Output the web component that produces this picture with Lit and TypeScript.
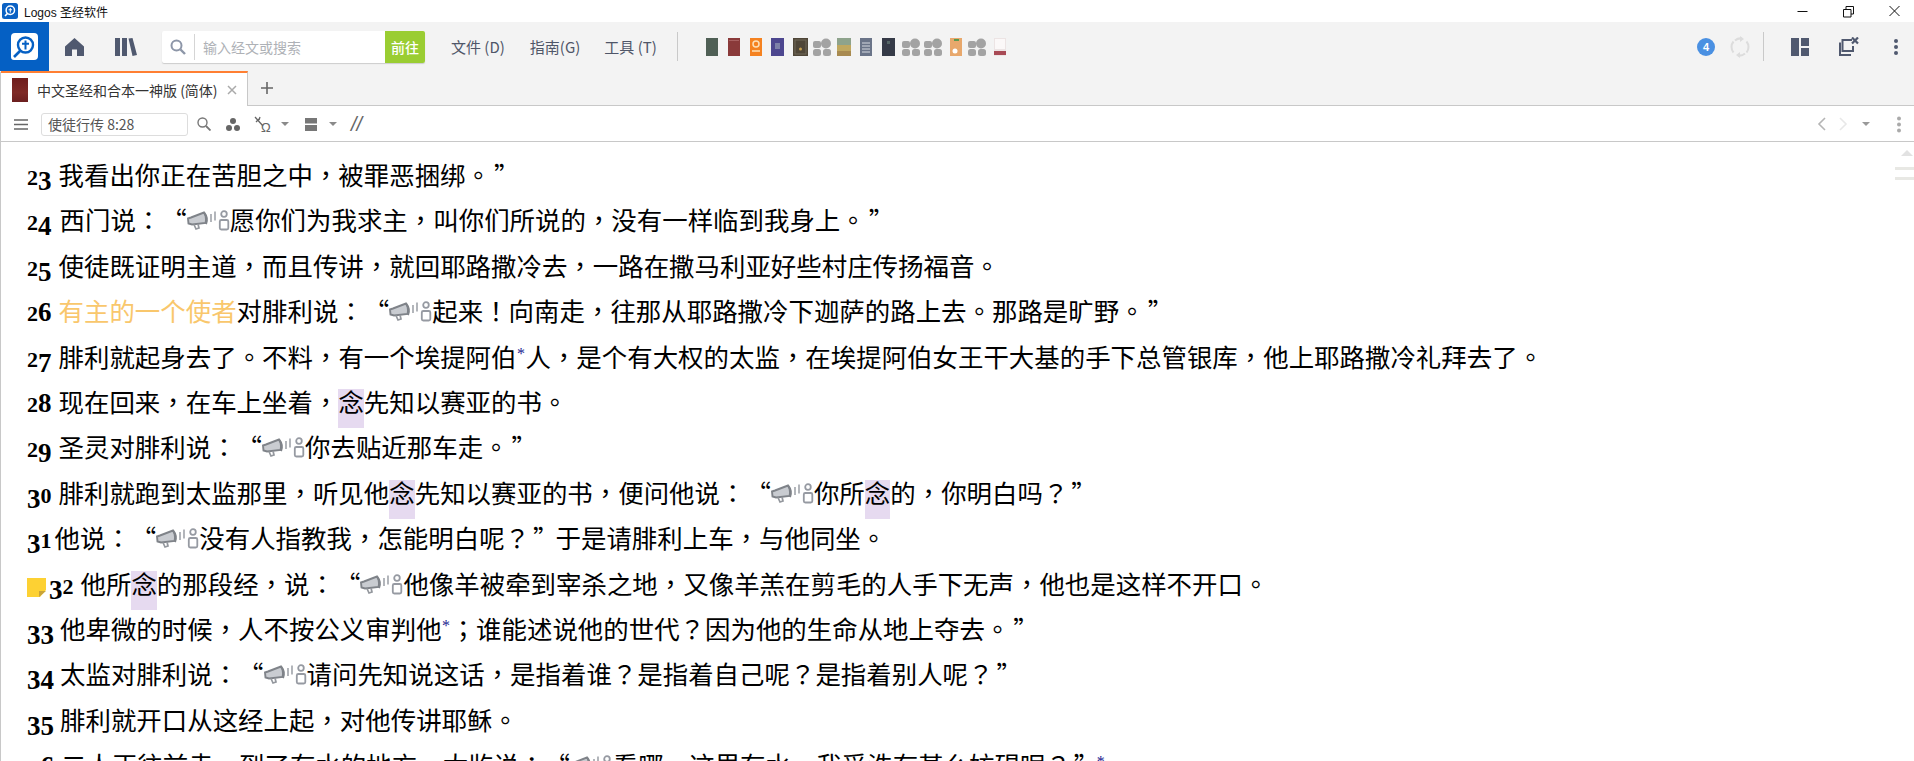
import { LitElement, html, css, svg } from "lit";
import { customElement } from "lit/decorators.js";

const speak = html`<svg class="speak" width="43" height="21" viewBox="0 0 43 21" aria-hidden="true">
  <g fill="none">
    <path d="M1 8.500 L4 7.500 L17 2.500 Q20 7 18.500 13 L5 14.500 L1.500 13.500 Z" fill="#c9ccd1" stroke="#7f8389" stroke-width="1.900"/>
    <path d="M17 2.500 Q21.500 8 19 14" stroke="#7f8389" stroke-width="2"/>
    <path d="M7 14.500 L9 19 L12 18 L11 14" stroke="#94989e" stroke-width="1.700"/>
    <path d="M24 4 v8 M28 1.500 v9" stroke-width="1.600" stroke="#a0a4aa"/>
    <circle cx="37" cy="4" r="2.800" stroke="#969aa2" stroke-width="1.800"/>
    <rect x="32.800" y="10" width="8.500" height="9.500" rx="1.500" stroke="#969aa2" stroke-width="1.800"/>
  </g></svg>`;

const nian = html`<span class="hl">念</span>`;
const star = html`<sup>*</sup>`;

const split = (s: string) =>
  s.split(/([，。！？：；”])/).map((c, i) =>
    i % 2 ? (c === "”" ? html`<span class="cq">${c}</span>` : html`<span class="p">${c}</span>`) : c,
  );
const T = (strings: TemplateStringsArray, ...vals: unknown[]) => {
  const out: unknown[] = [];
  strings.forEach((s, i) => {
    out.push(...split(s));
    if (i < vals.length) out.push(vals[i]);
  });
  return out;
};

const verses: { n: string; t: unknown; note?: boolean; mr?: number }[] = [
  { n: "23", t: T`我看出你正在苦胆之中，被罪恶捆绑。”` },
  { n: "24", t: T`西门说：“${speak}愿你们为我求主，叫你们所说的，没有一样临到我身上。”`, mr: 8 },
  { n: "25", t: T`使徒既证明主道，而且传讲，就回耶路撒冷去，一路在撒马利亚好些村庄传扬福音。` },
  { n: "26", t: T`${html`<span class="angel">有主的一个使者</span>`}对腓利说：“${speak}起来！向南走，往那从耶路撒冷下迦萨的路上去。那路是旷野。”` },
  { n: "27", t: T`腓利就起身去了。不料，有一个埃提阿伯${star}人，是个有大权的太监，在埃提阿伯女王干大基的手下总管银库，他上耶路撒冷礼拜去了。` },
  { n: "28", t: T`现在回来，在车上坐着，${nian}先知以赛亚的书。` },
  { n: "29", t: T`圣灵对腓利说：“${speak}你去贴近那车走。”` },
  { n: "30", t: T`腓利就跑到太监那里，听见他${nian}先知以赛亚的书，便问他说：“${speak}你所${nian}的，你明白吗？”` },
  { n: "31", t: T`他说：“${speak}没有人指教我，怎能明白呢？”于是请腓利上车，与他同坐。`, mr: 3 },
  { n: "32", note: true, t: T`他所${nian}的那段经，说：“${speak}他像羊被牵到宰杀之地，又像羊羔在剪毛的人手下无声，他也是这样不开口。` },
  { n: "33", t: T`他卑微的时候，人不按公义审判他${star}；谁能述说他的世代？因为他的生命从地上夺去。”`, mr: 6 },
  { n: "34", t: T`太监对腓利说：“${speak}请问先知说这话，是指着谁？是指着自己呢？是指着别人呢？”`, mr: 6 },
  { n: "35", t: T`腓利就开口从这经上起，对他传讲耶稣。`, mr: 6 },
  { n: "36", t: T`二人正往前走，到了有水的地方。太监说：“${speak}看哪，这里有水，我受洗有甚么妨碍呢？”${star}` },
];

const digitClass = (d: string) => ("012".includes(d) ? "dx" : "68".includes(d) ? "dt" : "dd");

const group = svg`<g fill="#a3a3a3"><rect x="0" y="3" width="8" height="7" rx="2"/><circle cx="13" cy="5.500" r="5"/><rect x="0" y="11" width="8" height="7" rx="2.500"/><rect x="10" y="11" width="8" height="7" rx="2.500"/></g>`;

const book = (w: number, ml: number, inner: unknown) =>
  html`<svg style="margin-left:${ml}px" width=${w} height="18" viewBox="0 0 ${w} 18">${inner}</svg>`;
const thumbs = [
  book(12, 0, svg`<rect width="12" height="18" fill="#4f5f55"/>`),
  book(12, 10, svg`<rect width="12" height="18" fill="#8a3a3a"/><rect x="1" y="2" width="10" height="1" fill="#a86060"/>`),
  book(12, 10, svg`<rect width="12" height="18" fill="#f58220"/><circle cx="6" cy="6" r="3" fill="none" stroke="#fde0b8" stroke-width="1.500"/><rect x="2" y="12" width="8" height="2" fill="#fcc98f"/>`),
  book(13, 9, svg`<rect width="13" height="18" fill="#4d478f"/><rect x="4" y="5" width="5" height="6" fill="#7d80a8"/>`),
  book(15, 9, svg`<rect width="15" height="18" fill="#4f4638"/><rect x="2" y="2" width="11" height="14" fill="none" stroke="#706858"/><circle cx="7.500" cy="11" r="1.500" fill="#c6a050"/>`),
  book(18, 5, group),
  book(14, 6, svg`<rect width="14" height="18" fill="#8ea38c"/><rect y="7" width="14" height="6" fill="#c0a860"/><rect y="13" width="14" height="5" fill="#a88a50"/>`),
  book(12, 9, svg`<rect width="12" height="18" fill="#6a7488"/><path d="M2 5h8M2 8h8M2 11h8M2 14h8" stroke="#d5d9e0"/>`),
  book(13, 10, svg`<rect width="13" height="18" fill="#353a47"/><rect x="5" y="3" width="3" height="3" fill="#566"/>`),
  book(18, 7, group),
  book(18, 4, group),
  book(12, 8, svg`<rect width="12" height="18" fill="#e8a86c"/><rect x="4" y="1" width="5" height="2" fill="#5a9a50"/><circle cx="5" cy="13" r="2.500" fill="#fff"/>`),
  book(18, 6, group),
  book(12, 8, svg`<rect width="12" height="18" fill="#ece4e4"/><rect x="1" y="1" width="10" height="10" fill="#fbf8f8"/><rect y="13" width="12" height="4" fill="#a84a55"/>`),
];

@customElement("app-root")
export class AppRoot extends LitElement {
  static styles = css`
    :host { display: block; width: 1914px; height: 761px; overflow: hidden; background: #fff; font-family: "Noto Sans CJK SC", "Noto Sans", sans-serif; position: relative; text-spacing-trim: space-all; }
    svg { display: block; flex: none; }
    .title { height: 22px; display: flex; align-items: center; padding-left: 2px; font-size: 12px; color: #111; font-family: "Liberation Sans", "Noto Sans CJK SC", sans-serif; }
    .title span { margin-left: 6px; }
    .winbtns { margin-left: auto; display: flex; gap: 35px; padding-right: 14px; }
    .bar { height: 49px; background: #f3f3f3; display: flex; align-items: center; }
    .logo { width: 49px; height: 49px; background: #0560c4; display: flex; align-items: center; justify-content: center; }
    .home { margin-left: 16px; }
    .lib { margin-left: 31px; }
    .search { margin-left: 25px; width: 263px; height: 32px; background: #fff; border-radius: 2px; box-shadow: 0 1px 1px #ccc; display: flex; align-items: center; }
    .search svg { margin-left: 8px; }
    .search i { width: 1px; height: 26px; background: #d5d5d5; margin-left: 8px; }
    .ph { margin-left: 8px; font-size: 14px; color: #aeb1b6; flex: 1; }
    .go { width: 40px; height: 32px; background: #9acd32; color: #fff; font-size: 14px; font-weight: 500; display: flex; align-items: center; justify-content: center; border-radius: 0 2px 2px 0; }
    .menu { margin-left: 26px; font-size: 15px; color: #4f5668; white-space: nowrap; }
    .m2 { margin-left: 25px; }
    .m3 { margin-left: 24px; }
    .sep { width: 1px; height: 29px; background: #c9c9c9; flex: none; }
    .bar > .sep.first { margin-left: 20px; }
    .thumbs { display: flex; align-items: center; margin-left: 28px; height: 18px; }
    .barright { margin-left: auto; display: flex; align-items: center; }
    .badge { width: 18px; height: 18px; border-radius: 50%; background: #4a90e2; color: #fff; font: bold 11px "Liberation Sans", sans-serif; display: flex; align-items: center; justify-content: center; }
    .sync { margin-left: 15px; }
    .barright .sep { margin-left: 13px; }
    .lay { margin-left: 27px; }
    .pop { margin-left: 29px; }
    .kebab { margin-left: 34px; margin-right: 15px; }
    .tabs { height: 35px; display: flex; background: #f3f3f3; align-items: stretch; box-sizing: border-box; }
    .tab { margin-left: 1px; width: 247px; background: #fff; border-top: 2px solid #ff7f32; border-right: 1px solid #c8c8c8; box-sizing: border-box; display: flex; align-items: center; padding-left: 11px; font-size: 14px; color: #333; white-space: nowrap; }
    .cover { width: 16px; height: 24px; background: linear-gradient(#6e1c1c, #7e2a26 60%, #6b1f1f); flex: none; margin-right: 9px; }
    .tab b { font-weight: 400; }
    .x { margin-left: auto; margin-right: 10px; }
    .tabrest { flex: 1; border-bottom: 1px solid #c8c8c8; display: flex; align-items: center; padding-left: 13px; }
    .tools { height: 36px; box-sizing: border-box; border-bottom: 1px solid #c8c8c8; display: flex; align-items: center; margin-left: 1px; padding: 1px 0 0 13px; }
    .ref { margin-left: 13px; width: 147px; height: 23px; box-sizing: border-box; border: 1px solid #ddd; border-radius: 3px; font-size: 14px; color: #555; padding-left: 6px; display: flex; align-items: center; }
    .caret { width: 0; height: 0; border-left: 4px solid transparent; border-right: 4px solid transparent; border-top: 4px solid #8a8a8a; flex: none; }
    .slashes { margin-left: 14px; font: italic 20px "Liberation Sans", sans-serif; color: #666; letter-spacing: 0; line-height: 1.2; }
    .tright { margin-left: auto; display: flex; align-items: center; padding-right: 12px; }
    .body { padding: 9px 0 0 27px; height: 619px; overflow: hidden; box-sizing: border-box; color: #000; font-size: 25.45px; }
    .v { height: 45.4px; line-height: 45.4px; white-space: nowrap; }
    .n { font-family: "Liberation Serif", serif; font-weight: 700; font-size: 27px; margin-right: 7px; line-height: 0; }
    .dx { font-size: 22px; line-height: 0; }
    .dt { line-height: 0; }
    .dd { line-height: 0; vertical-align: -5px; }
    .p { font-family: "Noto Sans CJK TC", sans-serif; }
    .cq { padding-left: 3px; margin-right: -3px; }
    .note { display: inline-block; vertical-align: -3px; margin-right: 3px; }
    .speak { display: inline-block; vertical-align: -1px; }
    .angel { color: #f9c76c; }
    .hl { position: relative; display: inline-block; z-index: 0; line-height: 1; }
    .hl::before { content: ""; position: absolute; left: 0; right: 0; top: 1px; height: 39px; background: #e6daf0; z-index: -1; }
    sup { color: #1a1a90; font-size: 16px; line-height: 0; vertical-align: 8px; margin: 0 .5px; font-family: "Liberation Serif", serif; }
    .edge { position: absolute; left: 0; top: 72px; bottom: 0; width: 1px; background: #c8c8c8; }
    .scroll { position: absolute; right: 0; top: 150px; width: 19px; display: flex; flex-direction: column; align-items: flex-end; }
    .tri { width: 0; height: 0; border-left: 6px solid transparent; border-right: 6px solid transparent; border-bottom: 6px solid #e2e2e2; margin-right: 1px; }
    .ln { width: 19px; height: 3px; background: #e8e8e4; margin-top: 7px; }
    .ln.a { margin-top: 11px; }
  `;

  render() {
    return html`
      <div class="title">
        <svg width="16" height="16" viewBox="0 0 16 16"><rect width="16" height="16" rx="2.500" fill="#0b62c4"/><circle cx="8.300" cy="7.300" r="4.200" fill="none" stroke="#fff" stroke-width="1.500"/><path d="M5.300 10.600 L3 13" stroke="#fff" stroke-width="1.600"/><path d="M8.300 5v4.600M6.600 6.800h3.400" stroke="#fff" stroke-width="1"/></svg>
        <span>Logos 圣经软件</span>
        <div class="winbtns">
          <svg width="11" height="18" viewBox="0 0 11 18"><path d="M0.500 9.500h10" stroke="#111"/></svg>
          <svg width="11" height="18" viewBox="0 0 11 18"><path d="M.5 7.500h7.500v7.500h-7.500zM3 7.500v-3h7.500v7.500h-2.500" fill="none" stroke="#111"/></svg>
          <svg width="11" height="18" viewBox="0 0 11 18"><path d="M.5 4l10 10M10.500 4l-10 10" stroke="#111"/></svg>
        </div>
      </div>
      <div class="bar">
        <div class="logo"><svg width="27" height="27" viewBox="0 0 27 27"><path d="M4 0h19a4 4 0 0 1 4 4v19a4 4 0 0 1-4 4H4l-1 0a3 3 0 0 1-3-3V4a4 4 0 0 1 4-4z" fill="#fff"/><circle cx="14.500" cy="12" r="7.500" fill="none" stroke="#0560c4" stroke-width="2.400"/><path d="M9 18 L3 24" stroke="#0560c4" stroke-width="2.600"/><path d="M14.500 7.500v9M11 10.800h7" stroke="#0560c4" stroke-width="2"/></svg></div>
        <svg class="home" width="19" height="18" viewBox="0 0 19 18"><path d="M9.500 0 L19 8.500 V18 H12 V11.500 H7 V18 H0 V8.500 Z" fill="#50596f"/></svg>
        <svg class="lib" width="22" height="18" viewBox="0 0 22 18"><path d="M0 0h5v18H0zM7 0h5v18H7zM13.500 .5l4-.5 4.500 17-4.500 1z" fill="#50596f"/></svg>
        <div class="search">
          <svg width="16" height="16" viewBox="0 0 16 16"><circle cx="6.500" cy="6.500" r="5" fill="none" stroke="#8d96a8" stroke-width="2"/><path d="M10.500 10.500 L15 15" stroke="#8d96a8" stroke-width="2.400"/></svg>
          <i></i><span class="ph">输入经文或搜索</span><span class="go">前往</span>
        </div>
        <span class="menu">文件 (D)</span>
        <span class="menu m2">指南(G)</span>
        <span class="menu m3">工具 (T)</span>
        <span class="sep first"></span>
        <div class="thumbs">${thumbs}</div>
        <div class="barright">
          <span class="badge">4</span>
          <svg class="sync" width="20" height="22" viewBox="0 0 20 22"><path d="M5 4.500A8.600 8.600 0 0 1 12 2.500M15 17.500A8.600 8.600 0 0 1 8 19.500M16.500 5.500a8.600 8.600 0 0 1 0 11M3.500 16.500a8.600 8.600 0 0 1 0-11" fill="none" stroke="#dcdcdc" stroke-width="2"/><path d="M10 0 L14 3 10 6zM10 22 L6 19 10 16z" fill="#dcdcdc"/></svg>
          <span class="sep"></span>
          <svg class="lay" width="18" height="18" viewBox="0 0 18 18"><path d="M0 0h8v18H0zM10 0h8v8h-8zM10 10h8v8h-8z" fill="#50596f"/></svg>
          <svg class="pop" width="21" height="20" viewBox="0 0 21 20"><path d="M14 3H4.500V14H15V9M2 5.500V18H13" fill="none" stroke="#50596f" stroke-width="2"/><path d="M14 0.500l6 6M20 0.500l-6 6" stroke="#50596f" stroke-width="2.200"/></svg>
          <svg class="kebab" width="6" height="18" viewBox="0 0 6 18"><g fill="#50596f"><circle cx="3" cy="3" r="2"/><circle cx="3" cy="9" r="2"/><circle cx="3" cy="15" r="2"/></g></svg>
        </div>
      </div>
      <div class="tabs">
        <div class="tab"><span class="cover"></span><b>中文圣经和合本一神版 (简体)</b>
          <svg class="x" width="10" height="10" viewBox="0 0 10 10"><path d="M1 1l8 8M9 1l-8 8" stroke="#aaa" stroke-width="1.500"/></svg></div>
        <div class="tabrest"><svg width="12" height="12" viewBox="0 0 12 12"><path d="M6 0v12M0 6h12" stroke="#666" stroke-width="1.600"/></svg></div>
      </div>
      <div class="tools">
        <svg width="14" height="11" viewBox="0 0 14 11"><path d="M0 1h14M0 5.500h14M0 10h14" stroke="#666" stroke-width="1.500"/></svg>
        <div class="ref">使徒行传 8:28</div>
        <svg style="margin-left:9px" width="14" height="14" viewBox="0 0 14 14"><circle cx="5.500" cy="5.500" r="4.500" fill="none" stroke="#777" stroke-width="1.400"/><path d="M9 9l4.500 4.500" stroke="#777" stroke-width="1.800"/></svg>
        <svg style="margin-left:15px" width="14" height="13" viewBox="0 0 14 13"><g fill="#666"><circle cx="7" cy="3" r="3"/><circle cx="3" cy="10" r="3"/><circle cx="11" cy="10" r="3"/></g></svg>
        <svg style="margin-left:14px" width="18" height="17" viewBox="0 0 18 17"><path d="M1 1l8 9M2 6l3-3M6 1l-1 3" stroke="#666" stroke-width="1.300" fill="none"/><text x="7" y="16" font-size="13" font-family="Liberation Sans" fill="#666">Ω</text></svg>
        <span class="caret" style="margin-left:9px"></span>
        <svg style="margin-left:16px" width="12" height="13" viewBox="0 0 12 13"><path d="M0 0h12v5.500H0zM0 7h12v6H0z" fill="#777"/></svg>
        <span class="caret" style="margin-left:12px"></span>
        <span class="slashes">//</span>
        <div class="tright">
          <svg width="9" height="14" viewBox="0 0 9 14"><path d="M8 1L2 7l6 6" fill="none" stroke="#b5b5b5" stroke-width="1.600"/></svg>
          <svg style="margin-left:13px" width="9" height="14" viewBox="0 0 9 14"><path d="M1 1l6 6-6 6" fill="none" stroke="#e8e8e8" stroke-width="1.600"/></svg>
          <span class="caret" style="margin-left:14px;border-top-color:#999"></span>
          <svg style="margin-left:26px" width="6" height="17" viewBox="0 0 6 17"><g fill="#aaa"><circle cx="3" cy="2.500" r="2"/><circle cx="3" cy="8.500" r="2"/><circle cx="3" cy="14.500" r="2"/></g></svg>
        </div>
      </div>
      <div class="body">
        ${verses.map((v) => html`<div class="v">${v.note ? html`<svg class="note" width="19" height="19" viewBox="0 0 19 19"><path d="M0 0h19v12l-6 7H0z" fill="#fdd133"/><path d="M12 19v-6h7z" fill="#c9a43a"/></svg>` : ""}<span class="n" style=${v.mr ? `margin-right:${v.mr}px` : ""}>${[...v.n].map((d) => html`<span class=${digitClass(d)}>${d}</span>`)}</span><span class="t">${v.t}</span></div>`)}
      </div>
      <div class="edge"></div>
      <div class="scroll"><span class="tri"></span><span class="ln a"></span><span class="ln"></span></div>
    `;
  }
}
